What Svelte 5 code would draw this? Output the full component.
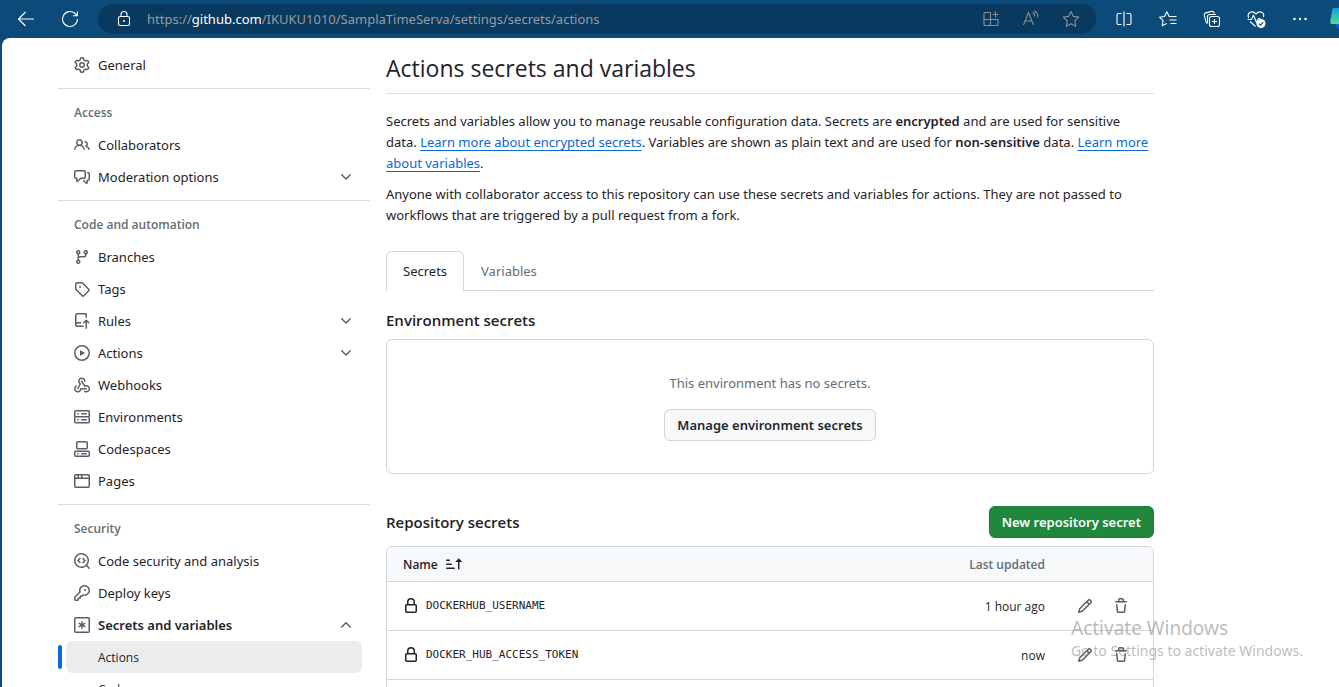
<script>
  const icons = {
    gear: 'M8 0a8.2 8.2 0 0 1 .701.031C9.444.095 9.99.645 10.16 1.29l.288 1.107c.018.066.079.158.212.224.231.114.454.243.668.386.123.082.233.09.299.071l1.103-.303c.644-.176 1.392.021 1.82.63.27.385.506.792.704 1.218.315.675.111 1.422-.364 1.891l-.814.806c-.049.048-.098.147-.088.294.016.257.016.515 0 .772-.01.147.038.246.088.294l.814.806c.475.469.679 1.216.364 1.891a7.977 7.977 0 0 1-.704 1.217c-.428.61-1.176.807-1.82.63l-1.102-.302c-.067-.019-.177-.011-.3.071a5.909 5.909 0 0 1-.668.386c-.133.066-.194.158-.211.224l-.29 1.106c-.168.646-.715 1.196-1.458 1.26a8.006 8.006 0 0 1-1.402 0c-.743-.064-1.289-.614-1.458-1.26l-.289-1.106c-.018-.066-.079-.158-.212-.224a5.738 5.738 0 0 1-.668-.386c-.123-.082-.233-.09-.299-.071l-1.103.303c-.644.176-1.392-.021-1.82-.63a8.12 8.12 0 0 1-.704-1.218c-.315-.675-.111-1.422.363-1.891l.815-.806c.05-.048.098-.147.088-.294a6.214 6.214 0 0 1 0-.772c.01-.147-.038-.246-.088-.294l-.815-.806C.635 6.045.431 5.298.746 4.623a7.92 7.92 0 0 1 .704-1.217c.428-.61 1.176-.807 1.82-.63l1.102.302c.067.019.177.011.3-.071.214-.143.437-.272.668-.386.133-.066.194-.158.211-.224l.29-1.106C6.009.645 6.556.095 7.299.03 7.53.01 7.764 0 8 0Zm-.571 1.525c-.036.003-.108.036-.137.146l-.289 1.105c-.147.561-.549.967-.998 1.189-.173.086-.34.183-.5.29-.417.278-.97.423-1.529.27l-1.103-.303c-.109-.03-.175.016-.195.045-.22.312-.412.644-.573.99-.014.031-.021.11.059.19l.815.806c.411.406.562.957.53 1.456a4.709 4.709 0 0 0 0 .582c.032.499-.119 1.05-.53 1.456l-.815.806c-.081.08-.073.159-.059.19.162.346.353.677.573.989.02.03.085.076.195.046l1.102-.303c.56-.153 1.113-.008 1.53.27.161.107.328.204.501.29.447.222.85.629.997 1.189l.289 1.105c.029.109.101.143.137.146a6.6 6.6 0 0 0 1.142 0c.036-.003.108-.036.137-.146l.289-1.105c.147-.561.549-.967.998-1.189.173-.086.34-.183.5-.29.417-.278.97-.423 1.529-.27l1.103.303c.109.029.175-.016.195-.045.22-.313.411-.644.573-.99.014-.031.021-.11-.059-.19l-.815-.806c-.411-.406-.562-.957-.53-1.456a4.709 4.709 0 0 0 0-.582c-.032-.499.119-1.05.53-1.456l.815-.806c.081-.08.073-.159.059-.19a6.464 6.464 0 0 0-.573-.989c-.02-.03-.085-.076-.195-.046l-1.102.303c-.56.153-1.113.008-1.53-.27a4.44 4.44 0 0 0-.501-.29c-.447-.222-.85-.629-.997-1.189l-.289-1.105c-.029-.11-.101-.143-.137-.146a6.6 6.6 0 0 0-1.142 0ZM11 8a3 3 0 1 1-6 0 3 3 0 0 1 6 0ZM9.5 8a1.5 1.5 0 1 0-3.001.001A1.5 1.5 0 0 0 9.5 8Z',
    people: 'M2 5.5a3.5 3.5 0 1 1 5.898 2.549 5.508 5.508 0 0 1 3.034 4.084.75.75 0 1 1-1.482.235 4 4 0 0 0-7.9 0 .75.75 0 0 1-1.482-.236A5.507 5.507 0 0 1 3.102 8.05 3.493 3.493 0 0 1 2 5.5ZM11 4a3.001 3.001 0 0 1 2.22 5.018 5.01 5.01 0 0 1 2.56 3.012.749.749 0 0 1-.885.954.752.752 0 0 1-.549-.514 3.507 3.507 0 0 0-2.522-2.372.75.75 0 0 1-.574-.73v-.352a.75.75 0 0 1 .416-.672A1.5 1.5 0 0 0 11 5.5.75.75 0 0 1 11 4Zm-5.5-.5a2 2 0 1 0-.001 3.999A2 2 0 0 0 5.5 3.5Z',
    discussion: 'M1.75 1h8.5c.966 0 1.75.784 1.75 1.75v5.5A1.75 1.75 0 0 1 10.25 10H7.061l-2.574 2.573A1.458 1.458 0 0 1 2 11.543V10h-.25A1.75 1.75 0 0 1 0 8.25v-5.5C0 1.784.784 1 1.75 1ZM1.5 2.75v5.5c0 .138.112.25.25.25h1a.75.75 0 0 1 .75.75v2.19l2.72-2.72a.749.749 0 0 1 .53-.22h3.5a.25.25 0 0 0 .25-.25v-5.5a.25.25 0 0 0-.25-.25h-8.5a.25.25 0 0 0-.25.25Zm13 2a.25.25 0 0 0-.25-.25h-.5a.75.75 0 0 1 0-1.5h.5c.966 0 1.75.784 1.75 1.75v5.5A1.75 1.75 0 0 1 14.25 12H14v1.543a1.458 1.458 0 0 1-2.487 1.03L9.22 12.28a.749.749 0 0 1 .326-1.275.749.749 0 0 1 .734.215l2.22 2.22v-2.19a.75.75 0 0 1 .75-.75h1a.25.25 0 0 0 .25-.25Z',
    branch: 'M9.5 3.25a2.25 2.25 0 1 1 3 2.122V6A2.5 2.5 0 0 1 10 8.5H6a1 1 0 0 0-1 1v1.128a2.251 2.251 0 1 1-1.5 0V5.372a2.25 2.25 0 1 1 1.5 0v1.836A2.493 2.493 0 0 1 6 7h4a1 1 0 0 0 1-1v-.628A2.25 2.25 0 0 1 9.5 3.25Zm-6 0a.75.75 0 1 0 1.5 0 .75.75 0 0 0-1.5 0Zm8.25-.75a.75.75 0 1 0 0 1.5.75.75 0 0 0 0-1.5ZM4.25 12a.75.75 0 1 0 0 1.5.75.75 0 0 0 0-1.5Z',
    tag: 'M1 7.775V2.75C1 1.784 1.784 1 2.75 1h5.025c.464 0 .91.184 1.238.513l6.25 6.25a1.75 1.75 0 0 1 0 2.474l-5.026 5.026a1.75 1.75 0 0 1-2.474 0l-6.25-6.25A1.752 1.752 0 0 1 1 7.775Zm1.5 0c0 .066.026.13.073.177l6.25 6.25a.25.25 0 0 0 .354 0l5.025-5.025a.25.25 0 0 0 0-.354l-6.25-6.25a.25.25 0 0 0-.177-.073H2.75a.25.25 0 0 0-.25.25ZM6 5a1 1 0 1 1 0 2 1 1 0 0 1 0-2Z',
    rules: 'M1 2.5A2.5 2.5 0 0 1 3.5 0h8.75a.75.75 0 0 1 .75.75v3.5a.75.75 0 0 1-1.5 0V1.5h-8a1 1 0 0 0-1 1v6.708A2.493 2.493 0 0 1 3.5 9h3.25a.75.75 0 0 1 0 1.5H3.5a1 1 0 0 0 0 2h5.75a.75.75 0 0 1 0 1.5H3.5A2.5 2.5 0 0 1 1 11.5Zm13.23 7.79h-.001l-1.224-1.224v6.184a.75.75 0 0 1-1.5 0V9.066L10.28 10.29a.75.75 0 0 1-1.06-1.061l2.505-2.504a.75.75 0 0 1 1.06 0L15.29 9.23a.751.751 0 0 1-.018 1.042.751.751 0 0 1-1.042.018Z',
    play: 'M8 0a8 8 0 1 1 0 16A8 8 0 0 1 8 0ZM1.5 8a6.5 6.5 0 1 0 13 0 6.5 6.5 0 0 0-13 0Zm4.879-2.773 4.264 2.559a.25.25 0 0 1 0 .428l-4.264 2.559A.25.25 0 0 1 6 10.559V5.442a.25.25 0 0 1 .379-.215Z',
    webhook: 'M5.5 4.25a2.25 2.25 0 0 1 4.5 0 .75.75 0 0 0 1.5 0 3.75 3.75 0 1 0-6.14 2.889l-2.272 4.258a.75.75 0 0 0 1.324.706L7 7.25a.75.75 0 0 0-.309-1.015A2.25 2.25 0 0 1 5.5 4.25ZM7.364 3.607a.75.75 0 0 1 1.03.257l2.608 4.349a3.75 3.75 0 1 1-.628 6.785.75.75 0 0 1 .752-1.299 2.25 2.25 0 1 0-.033-3.88.75.75 0 0 1-1.03-.256L7.107 4.636a.75.75 0 0 1 .257-1.03ZM2.9 8.776A.75.75 0 0 1 2.625 9.8 2.25 2.25 0 1 0 6 11.75a.75.75 0 0 1 .75-.751h5.5a.75.75 0 0 1 0 1.5H7.425a3.751 3.751 0 1 1-5.55-3.998.75.75 0 0 1 1.024.274Z',
    server: 'M1.75 1h12.5c.966 0 1.75.784 1.75 1.75v4c0 .372-.116.717-.314 1 .198.283.314.628.314 1v4a1.75 1.75 0 0 1-1.75 1.75H1.75A1.75 1.75 0 0 1 0 12.75v-4c0-.358.109-.707.314-1a1.739 1.739 0 0 1-.314-1v-4C0 1.784.784 1 1.75 1ZM1.5 2.75v4c0 .138.112.25.25.25h12.5a.25.25 0 0 0 .25-.25v-4a.25.25 0 0 0-.25-.25H1.75a.25.25 0 0 0-.25.25Zm.25 5.75a.25.25 0 0 0-.25.25v4c0 .138.112.25.25.25h12.5a.25.25 0 0 0 .25-.25v-4a.25.25 0 0 0-.25-.25ZM7 4.75A.75.75 0 0 1 7.75 4h4.5a.75.75 0 0 1 0 1.5h-4.5A.75.75 0 0 1 7 4.75ZM7.75 10h4.5a.75.75 0 0 1 0 1.5h-4.5a.75.75 0 0 1 0-1.5ZM3 4.75A.75.75 0 0 1 3.75 4h.5a.75.75 0 0 1 0 1.5h-.5A.75.75 0 0 1 3 4.75ZM3.75 10h.5a.75.75 0 0 1 0 1.5h-.5a.75.75 0 0 1 0-1.5Z',
    codespaces: 'M0 11.25c0-.966.784-1.75 1.75-1.75h12.5c.966 0 1.75.784 1.75 1.75v3A1.75 1.75 0 0 1 14.25 16H1.75A1.75 1.75 0 0 1 0 14.25Zm2-9.5C2 .784 2.784 0 3.75 0h8.5C13.216 0 14 .784 14 1.75v5a1.75 1.75 0 0 1-1.75 1.75h-8.5A1.75 1.75 0 0 1 2 6.75Zm1.75-.25a.25.25 0 0 0-.25.25v5c0 .138.112.25.25.25h8.5a.25.25 0 0 0 .25-.25v-5a.25.25 0 0 0-.25-.25Zm-2 9.5a.25.25 0 0 0-.25.25v3c0 .138.112.25.25.25h12.5a.25.25 0 0 0 .25-.25v-3a.25.25 0 0 0-.25-.25ZM7 12.75a.75.75 0 0 1 .75-.75h4.5a.75.75 0 0 1 0 1.5h-4.5a.75.75 0 0 1-.75-.75Zm-4 0a.75.75 0 0 1 .75-.75h.5a.75.75 0 0 1 0 1.5h-.5a.75.75 0 0 1-.75-.75Z',
    browser: 'M0 2.75C0 1.784.784 1 1.75 1h12.5c.966 0 1.75.784 1.75 1.75v10.5A1.75 1.75 0 0 1 14.25 15H1.75A1.75 1.75 0 0 1 0 13.25ZM14.5 6h-13v7.25c0 .138.112.25.25.25h12.5a.25.25 0 0 0 .25-.25Zm-6-3.5v2h6V2.75a.25.25 0 0 0-.25-.25ZM5 2.5v2h2v-2Zm-3.25 0a.25.25 0 0 0-.25.25V4.5h2v-2Z',
    codescan: 'M8.47 4.97a.75.75 0 0 0 0 1.06L9.94 7.5 8.47 8.97a.75.75 0 1 0 1.06 1.06l2-2a.75.75 0 0 0 0-1.06l-2-2a.75.75 0 0 0-1.06 0ZM6.53 6.03a.75.75 0 0 0-1.06-1.06l-2 2a.75.75 0 0 0 0 1.06l2 2a.75.75 0 1 0 1.06-1.06L5.06 7.5l1.47-1.47ZM12.246 13.307a7.501 7.501 0 1 1 1.06-1.06l2.474 2.473a.749.749 0 0 1-.326 1.275.749.749 0 0 1-.734-.215ZM1.5 7.5a6.002 6.002 0 0 0 3.608 5.504 6.002 6.002 0 0 0 6.486-1.117.748.748 0 0 1 .292-.293A6 6 0 1 0 1.5 7.5Z',
    key: 'M10.5 0a5.499 5.499 0 1 1-1.288 10.848l-.932.932a.749.749 0 0 1-.53.22H7v.75a.749.749 0 0 1-.22.53l-.5.5a.749.749 0 0 1-.53.22H5v.75a.749.749 0 0 1-.22.53l-.5.5a.749.749 0 0 1-.53.22h-2A1.75 1.75 0 0 1 0 14.25v-2c0-.199.079-.389.22-.53l4.932-4.932A5.5 5.5 0 0 1 10.5 0Zm-4 5.5c-.001.431.069.86.205 1.269a.75.75 0 0 1-.181.768L1.5 12.56v1.69c0 .138.112.25.25.25h1.69l.06-.06v-1.19a.75.75 0 0 1 .75-.75h1.19l.06-.06v-1.19a.75.75 0 0 1 .75-.75h1.19l1.023-1.025a.75.75 0 0 1 .768-.18A4 4 0 1 0 6.5 5.5ZM11 6a1 1 0 1 1 0-2 1 1 0 0 1 0 2Z',
    asterisk: 'M1.75 0h12.5C15.216 0 16 .784 16 1.75v12.5A1.75 1.75 0 0 1 14.25 16H1.75A1.75 1.75 0 0 1 0 14.25V1.75C0 .784.784 0 1.75 0ZM1.5 1.75v12.5c0 .138.112.25.25.25h12.5a.25.25 0 0 0 .25-.25V1.75a.25.25 0 0 0-.25-.25H1.75a.25.25 0 0 0-.25.25ZM8 4a.75.75 0 0 1 .75.75V6.7l1.69-.97a.75.75 0 0 1 .75 1.3L9.5 8l1.69.98a.75.75 0 0 1-.75 1.3L8.75 9.3v1.95a.75.75 0 0 1-1.5 0V9.3l-1.69.98a.75.75 0 0 1-.75-1.3L6.5 8l-1.69-.97a.75.75 0 0 1 .75-1.3l1.69.97V4.75A.75.75 0 0 1 8 4Z',
    down: 'M12.78 5.22a.749.749 0 0 1 0 1.06l-4.25 4.25a.749.749 0 0 1-1.06 0L3.22 6.28a.749.749 0 1 1 1.06-1.06L8 8.939l3.72-3.719a.749.749 0 0 1 1.06 0Z',
    up: 'M3.22 10.53a.749.749 0 0 1 0-1.06l4.25-4.25a.749.749 0 0 1 1.06 0l4.25 4.25a.749.749 0 1 1-1.06 1.06L8 6.811 4.28 10.53a.749.749 0 0 1-1.06 0Z',
    lock: 'M4 4a4 4 0 0 1 8 0v2h.25c.966 0 1.75.784 1.75 1.75v5.5A1.75 1.75 0 0 1 12.25 15h-8.5A1.75 1.75 0 0 1 2 13.25v-5.5C2 6.784 2.784 6 3.75 6H4Zm8.25 3.5h-8.5a.25.25 0 0 0-.25.25v5.5c0 .138.112.25.25.25h8.5a.25.25 0 0 0 .25-.25v-5.5a.25.25 0 0 0-.25-.25ZM10.5 6V4a2.5 2.5 0 1 0-5 0v2Z',
    pencil: 'M11.013 1.427a1.75 1.75 0 0 1 2.474 0l1.086 1.086a1.75 1.75 0 0 1 0 2.474l-8.61 8.61c-.21.21-.47.364-.756.445l-3.251.93a.75.75 0 0 1-.927-.928l.929-3.25c.081-.286.235-.547.445-.758l8.61-8.61Zm.176 4.823L9.75 4.81l-6.286 6.287a.253.253 0 0 0-.064.108l-.558 1.953 1.953-.558a.253.253 0 0 0 .108-.064Zm1.238-3.763a.25.25 0 0 0-.354 0L10.811 3.75l1.439 1.44 1.263-1.263a.25.25 0 0 0 0-.354Z',
    trash: 'M11 1.75V3h2.25a.75.75 0 0 1 0 1.5H2.75a.75.75 0 0 1 0-1.5H5V1.75C5 .784 5.784 0 6.75 0h2.5C10.216 0 11 .784 11 1.75ZM4.496 6.675l.66 6.6a.25.25 0 0 0 .249.225h5.19a.25.25 0 0 0 .249-.225l.66-6.6a.75.75 0 0 1 1.492.149l-.66 6.6A1.748 1.748 0 0 1 10.595 15h-5.19a1.75 1.75 0 0 1-1.741-1.575l-.66-6.6a.75.75 0 1 1 1.492-.15ZM6.5 1.75V3h3V1.75a.25.25 0 0 0-.25-.25h-2.5a.25.25 0 0 0-.25.25Z',
    sort: 'm12.927 2.573 3 3A.25.25 0 0 1 15.75 6H13.5v6.75a.75.75 0 0 1-1.5 0V6H9.75a.25.25 0 0 1-.177-.427l3-3a.25.25 0 0 1 .354 0ZM0 12.25a.75.75 0 0 1 .75-.75h7.5a.75.75 0 0 1 0 1.5H.75a.75.75 0 0 1-.75-.75Zm0-4a.75.75 0 0 1 .75-.75h4.5a.75.75 0 0 1 0 1.5H.75A.75.75 0 0 1 0 8.25Zm0-4a.75.75 0 0 1 .75-.75h2.5a.75.75 0 0 1 0 1.5H.75A.75.75 0 0 1 0 4.25Z'
  };

  const groups = [
    { items: [{ label: 'General', icon: 'gear' }] },
    {
      title: 'Access',
      items: [
        { label: 'Collaborators', icon: 'people' },
        { label: 'Moderation options', icon: 'discussion', toggle: 'down' }
      ]
    },
    {
      title: 'Code and automation',
      items: [
        { label: 'Branches', icon: 'branch' },
        { label: 'Tags', icon: 'tag' },
        { label: 'Rules', icon: 'rules', toggle: 'down' },
        { label: 'Actions', icon: 'play', toggle: 'down' },
        { label: 'Webhooks', icon: 'webhook' },
        { label: 'Environments', icon: 'server' },
        { label: 'Codespaces', icon: 'codespaces' },
        { label: 'Pages', icon: 'browser' }
      ]
    },
    {
      title: 'Security',
      items: [
        { label: 'Code security and analysis', icon: 'codescan' },
        { label: 'Deploy keys', icon: 'key' },
        { label: 'Secrets and variables', icon: 'asterisk', toggle: 'up', children: ['Actions', 'Codespaces'] }
      ]
    }
  ];

  const secrets = [
    { name: 'DOCKERHUB_USERNAME', updated: '1 hour ago' },
    { name: 'DOCKER_HUB_ACCESS_TOKEN', updated: 'now' }
  ];
</script>

{#snippet icon(name)}
  <svg class="icon" viewBox="0 0 16 16" width="16" height="16" aria-hidden="true"><path d={icons[name]} /></svg>
{/snippet}

<div class="window">
  <header class="toolbar">
    <button class="tool" aria-label="Back">
      <svg viewBox="0 0 20 20"><path d="M18 10H2.5M9.5 3 2.5 10l7 7" /></svg>
    </button>
    <button class="tool" aria-label="Refresh">
      <svg viewBox="0 0 20 20"><path d="M17.5 10a7.5 7.5 0 1 1-2.4-5.5l2 2M17.4 2.5v4.2h-4.4" /></svg>
    </button>
    <div class="address">
      <button class="tool" aria-label="Site information">
        <svg viewBox="0 0 20 20"><rect x="4.500" y="7.500" width="11" height="9" rx="1.500" /><path d="M7 7.500V5.500a3 3 0 0 1 6 0v2" /><circle class="solid" cx="10" cy="12" r="1" /></svg>
      </button>
      <div class="url">https://<b>github.com</b>/IKUKU1010/SamplaTimeServa/settings/secrets/actions</div>
      <div class="page-tools">
        <button class="tool" aria-label="Apps">
          <svg viewBox="0 0 20 20"><path d="M9.500 3.500H4a1 1 0 0 0-1 1v11a1 1 0 0 0 1 1h12a1 1 0 0 0 1-1V10.500H3M9.500 3.500v13M14.500 2.500v6M11.500 5.500h6" /></svg>
        </button>
        <button class="tool" aria-label="Read aloud">
          <svg viewBox="0 0 20 20"><path d="M2.500 16 7.500 3.500 12.500 16M4.200 12h6.600M11.500 3.500c1.500.7 2.300 2.200 2.200 4M13 2c2.700 1 4.200 3.500 3.800 6.500" /></svg>
        </button>
        <button class="tool" aria-label="Add to favorites">
          <svg viewBox="0 0 20 20"><path d="m10 2.500 2.350 4.900 5.350.7-3.900 3.750.95 5.350L10 14.650 5.250 17.200l.95-5.350L2.300 8.100l5.350-.7Z" /></svg>
        </button>
      </div>
    </div>
    <div class="browser-tools">
      <button class="tool" aria-label="Split screen">
        <svg viewBox="0 0 20 20"><path d="M7.500 4.500h-3a1.500 1.500 0 0 0-1.500 1.500v8a1.500 1.500 0 0 0 1.500 1.500h3M12.500 4.500h3A1.500 1.500 0 0 1 17 6v8a1.500 1.500 0 0 1-1.500 1.500h-3M10 2.500v15" /></svg>
      </button>
      <button class="tool" aria-label="Favorites">
        <svg viewBox="0 0 20 20"><path d="M12.500 7.500h-1.300L8.800 2.800 6.500 7.500l-5 .7 3.600 3.500-.9 5 4.500-2.300M12.500 7.500h6M11.500 11h7M12.500 14.500h6" /></svg>
      </button>
      <button class="tool" aria-label="Collections">
        <svg viewBox="0 0 20 20"><rect x="7.500" y="7.500" width="10" height="10" rx="2" /><path d="M5.500 14.500a2 2 0 0 1-1.500-1.500L2.300 6.200a2 2 0 0 1 1.500-2.300l6-1.500a2 2 0 0 1 2.300 1.400l.2.700M5.500 14V7.500a2 2 0 0 1 2-2h6.500M12.500 10v5M10 12.500h5" /></svg>
      </button>
      <button class="tool" aria-label="Browser essentials">
        <svg viewBox="0 0 20 20"><path d="M2.600 9C.6 3.500 6.500.8 10 5c3.500-4.200 9-1.500 7.400 3M1.500 10.500h4l2-4.500 3 7.500 2-4h2M4 12.500l5.500 5" /><circle class="solid" cx="15" cy="14.500" r="4.500" /><path class="tick" d="m13 14.700 1.500 1.500 2.700-3" /></svg>
      </button>
      <button class="tool" aria-label="Settings and more">
        <svg viewBox="0 0 20 20"><g class="solid"><circle cx="4.500" cy="10" r="1.200" /><circle cx="10" cy="10" r="1.200" /><circle cx="15.500" cy="10" r="1.200" /></g></svg>
      </button>
    </div>
    <button class="copilot" aria-label="Copilot">
      <svg viewBox="0 0 9 22">
        <defs><linearGradient id="sweep" x1="0" y1="0" x2="0" y2="1"><stop offset="0" stop-color="#08a3e8" /><stop offset="1" stop-color="#54dc85" /></linearGradient></defs>
        <path d="M5 13h4v8c-2 0-3-3-4-8Z" fill="#1b5be0" /><path d="M4 0h5v16H2c-2 0-2-2-1.500-4L2 3c.4-2 1-3 2-3Z" fill="url(#sweep)" />
      </svg>
    </button>
  </header>

  <div class="page">
    <nav class="sidebar" aria-label="Repository settings">
      {#each groups as group}
        <section>
          {#if group.title}<h2>{group.title}</h2>{/if}
          <ul>
            {#each group.items as item}
              <li>
                {#if item.toggle}
                  <button class="row" class:strong={item.children} aria-expanded={item.toggle === 'up'}>
                    {@render icon(item.icon)}<span>{item.label}</span>{@render icon(item.toggle)}
                  </button>
                {:else}
                  <a class="row" href="#top">{@render icon(item.icon)}<span>{item.label}</span></a>
                {/if}
                {#if item.children}
                  <ul>
                    {#each item.children as child, i}
                      <li><a class="row sub" class:current={i === 0} href="#top">{child}</a></li>
                    {/each}
                  </ul>
                {/if}
              </li>
            {/each}
          </ul>
        </section>
      {/each}
    </nav>

    <main>
      <h1>Actions secrets and variables</h1>
      <p>
        Secrets and variables allow you to manage reusable configuration data. Secrets are <strong>encrypted</strong> and are used for sensitive data.
        <a href="#top">Learn more about encrypted secrets</a>. Variables are shown as plain text and are used for <strong>non-sensitive</strong> data.
        <a href="#top">Learn more about variables</a>.
      </p>
      <p>Anyone with collaborator access to this repository can use these secrets and variables for actions. They are not passed to workflows that are triggered by a pull request from a fork.</p>

      <div class="tabs" role="tablist">
        <button role="tab" aria-selected="true">Secrets</button>
        <button role="tab" aria-selected="false">Variables</button>
      </div>

      <h3>Environment secrets</h3>
      <div class="blank">
        <div>This environment has no secrets.</div>
        <button class="btn">Manage environment secrets</button>
      </div>

      <div class="table-head">
        <h3>Repository secrets</h3>
        <button class="btn primary">New repository secret</button>
      </div>
      <div class="table-box">
        <table>
          <thead>
            <tr>
              <th><button class="sort">Name {@render icon('sort')}</button></th>
              <th class="updated">Last updated</th>
              <th class="actions" aria-label="Manage"></th>
            </tr>
          </thead>
          <tbody>
            {#each secrets as secret}
              <tr>
                <td><div class="secret">{@render icon('lock')}<code>{secret.name}</code></div></td>
                <td class="updated">{secret.updated}</td>
                <td class="actions">
                  <div class="pair">
                    <button aria-label="Edit {secret.name}">{@render icon('pencil')}</button>
                    <button aria-label="Delete {secret.name}">{@render icon('trash')}</button>
                  </div>
                </td>
              </tr>
            {/each}
            <tr><td colspan="3"></td></tr>
          </tbody>
        </table>
      </div>
    </main>
  </div>

  <aside class="watermark">
    <div class="big">Activate Windows</div>
    <div>Go to Settings to activate Windows.</div>
  </aside>
</div>

<style>
  :global(body) {
    margin: 0;
    overflow: hidden;
  }
  * {
    box-sizing: border-box;
  }
  button {
    font: inherit;
    color: inherit;
    background: none;
    border: 0;
    padding: 0;
    cursor: pointer;
  }
  ul {
    list-style: none;
    margin: 0;
    padding: 0;
  }
  .window {
    height: 100vh;
    display: flex;
    flex-direction: column;
    overflow: hidden;
    background: #0c4a7a;
    color: #1f2328;
    font: 13px/21px "Noto Sans", sans-serif;
  }

  /* Browser toolbar */
  .toolbar {
    flex: none;
    height: 38px;
    display: flex;
    align-items: center;
    padding-left: 16px;
    color: #fff;
  }
  .tool {
    width: 20px;
    height: 20px;
    flex: none;
  }
  .tool svg {
    display: block;
    width: 20px;
    height: 20px;
    fill: none;
    stroke: currentColor;
    stroke-width: 1.1;
    stroke-linejoin: round;
  }
  .tool .solid {
    fill: currentColor;
    stroke: none;
  }
  .tool .tick {
    stroke: #0c4a7a;
  }
  .toolbar > .tool + .tool {
    margin-left: 24px;
  }
  .address {
    flex: 1;
    height: 30px;
    margin-left: 18px;
    padding: 0 15px 0 16px;
    display: flex;
    align-items: center;
    gap: 13px;
    border-radius: 15px;
    background: #09395e;
  }
  .url {
    flex: 1;
    white-space: nowrap;
    color: #9a9b9c;
  }
  .url b {
    font-weight: 400;
    color: #fff;
  }
  .page-tools {
    display: flex;
    gap: 20px;
    color: #8b8f92;
  }
  .browser-tools {
    display: flex;
    gap: 24px;
    margin: 0 20px 0 18px;
  }
  .copilot {
    width: 9px;
    height: 22px;
  }
  .copilot svg {
    display: block;
    width: 9px;
    height: 22px;
  }

  /* Settings page */
  .page {
    flex: 1;
    min-height: 0;
    overflow: hidden;
    display: flex;
    align-items: flex-start;
    gap: 24px;
    margin-left: 2px;
    padding: 11px 64px 0;
    border-top-left-radius: 8px;
    background: #fff;
  }
  .icon {
    display: block;
    flex: none;
    fill: currentColor;
  }
  .sidebar {
    flex: none;
    width: 296px;
  }
  .sidebar section + section {
    margin: 7px -8px 0;
    padding: 8px 8px 0;
    border-top: 1px solid #d8dee4;
  }
  .sidebar h2 {
    margin: 0;
    padding-left: 8px;
    font: 600 12px/32px "Open Sans", sans-serif;
    color: #656d76;
  }
  .row {
    width: 100%;
    height: 32px;
    display: flex;
    align-items: center;
    gap: 8px;
    padding: 0 8px;
    border-radius: 6px;
    color: #1f2328;
    text-align: left;
    text-decoration: none;
  }
  .row .icon {
    color: #57606a;
  }
  .row span {
    flex: 1;
  }
  .strong {
    font-weight: 600;
  }
  .sub {
    position: relative;
    padding-left: 32px;
    font-family: "Open Sans", sans-serif;
    font-size: 12px;
  }
  .current {
    background: #ebecee;
  }
  .current::before {
    content: "";
    position: absolute;
    left: -8px;
    top: 4px;
    width: 4px;
    height: 24px;
    border-radius: 3px;
    background: #0969da;
  }

  main {
    flex: 1;
    min-width: 0;
    max-width: 768px;
  }
  h1 {
    margin: 0 0 17px;
    padding: 1px 0 7px;
    border-bottom: 1px solid #d8dee4;
    font: 400 23px/36px "Open Sans", sans-serif;
  }
  p {
    margin: 0 0 10px;
  }
  p a {
    color: #0969da;
    text-underline-offset: 3px;
  }
  strong {
    font-weight: 600;
  }
  .tabs {
    display: flex;
    margin-top: 25px;
    border-bottom: 1px solid #d0d7de;
  }
  .tabs button {
    height: 40px;
    margin-bottom: -1px;
    padding: 0 16px;
    border: 1px solid transparent;
    border-bottom: 0;
    border-radius: 6px 6px 0 0;
    color: #656d76;
  }
  .tabs [aria-selected="true"] {
    border-color: #d0d7de;
    background: #fff;
    color: #1f2328;
  }
  h3 {
    margin: 0;
    font: 600 15px/24px "Open Sans", sans-serif;
  }
  .tabs + h3 {
    margin: 17px 0 7px;
  }
  .blank {
    display: flex;
    flex-direction: column;
    align-items: center;
    gap: 15px;
    padding: 33px 32px 32px;
    border: 1px solid #d0d7de;
    border-radius: 6px;
    color: #656d76;
  }
  .btn {
    height: 32px;
    padding: 0 12px;
    border: 1px solid #d0d7de;
    border-radius: 6px;
    background: #f6f8fa;
    color: #24292f;
    font-weight: 600;
  }
  .primary {
    border-color: #1f7f38;
    background: #1f883d;
    color: #fff;
  }
  .table-head {
    display: flex;
    align-items: center;
    justify-content: space-between;
    margin: 32px 0 8px;
  }
  .table-box {
    border: 1px solid #d0d7de;
    border-radius: 6px;
    overflow: hidden;
  }
  table {
    width: 100%;
    border-collapse: separate;
    border-spacing: 0;
    font-family: "Open Sans", sans-serif;
    font-size: 12px;
  }
  th {
    height: 34px;
    padding: 0 16px;
    background: #f6f8fa;
    color: #656d76;
    font-weight: 600;
    text-align: left;
  }
  td {
    height: 49px;
    padding: 0 16px;
    border-top: 1px solid #d0d7de;
  }
  .updated {
    padding: 0;
    text-align: right;
  }
  .actions {
    width: 108px;
    padding: 0 24px 0 32px;
  }
  .sort {
    display: flex;
    align-items: center;
    gap: 8px;
    color: #1f2328;
    font-weight: 600;
  }
  .secret {
    display: flex;
    align-items: center;
    gap: 7px;
  }
  code {
    font: 11px/20px "DejaVu Sans Mono", monospace;
  }
  .pair {
    display: flex;
    gap: 20px;
    color: #57606a;
  }

  .watermark {
    position: absolute;
    right: 32px;
    bottom: 26px;
    width: 236px;
    pointer-events: none;
    color: rgba(120, 120, 120, 0.5);
    font-size: 14px;
    line-height: 20px;
    white-space: nowrap;
  }
  .watermark .big {
    font-size: 19px;
    line-height: 26px;
  }
</style>
